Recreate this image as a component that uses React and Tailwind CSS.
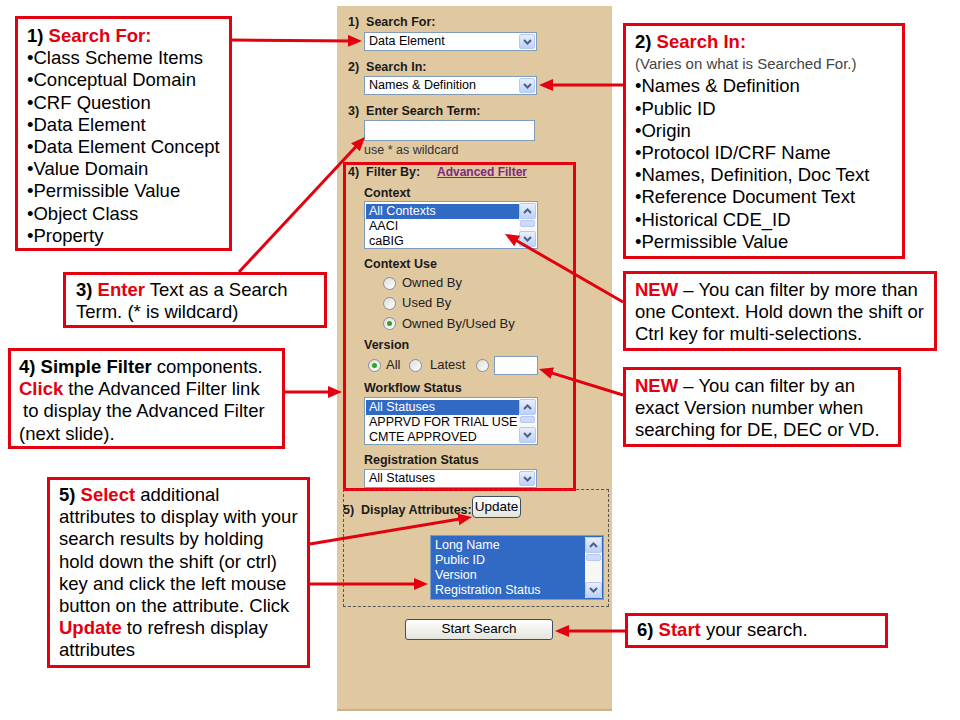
import React from "react";

const RED = "#e3000f";

// arrows: [fromX, fromY, tipX, tipY]
const arrows = [
  [232, 40, 362, 41],
  [623, 85, 539, 85],
  [239, 272, 365, 137],
  [285, 392, 342, 392],
  [623, 302, 505, 234],
  [623, 395, 539, 369],
  [310, 544, 472, 517],
  [310, 584, 428, 584],
  [625, 631, 555, 631],
];

function Chevron({ up }) {
  return (
    <svg width="9" height="6" viewBox="0 0 9 6">
      <path
        d={up ? "M1 5 L4.5 1.5 L8 5" : "M1 1 L4.5 4.5 L8 1"}
        fill="none"
        stroke="#4d6185"
        strokeWidth="2"
      />
    </svg>
  );
}

function ArrowBtn({ up, className = "" }) {
  return (
    <div
      className={`flex items-center justify-center rounded-[2px] border border-[#b7c9f3] bg-linear-to-b from-[#e8effd] to-[#bdd0f8] ${className}`}
    >
      <Chevron up={up} />
    </div>
  );
}

function Dropdown({ value, className = "" }) {
  return (
    <div
      className={`flex h-[19px] w-[173px] items-center border border-[#7f9db9] bg-white pr-px ${className}`}
    >
      <span className="flex-1 whitespace-nowrap pl-[4px] text-[12.5px] leading-none text-black">
        {value}
      </span>
      <ArrowBtn className="h-[15px] w-[16px]" />
    </div>
  );
}

function ListBox({ items, selected = [], allBlue, className = "" }) {
  return (
    <div
      className={`flex border border-[#7f9db9] p-px ${
        allBlue ? "bg-[#316ac5]" : "bg-white"
      } ${className}`}
    >
      <div className="min-w-0 flex-1 pt-px">
        {items.map((it, i) => (
          <div
            key={it}
            className={`h-[15px] overflow-hidden whitespace-nowrap pl-[3px] text-[12.5px] leading-[15px] ${
              selected.includes(i) ? "bg-[#316ac5] text-white" : "text-black"
            }`}
          >
            {it}
          </div>
        ))}
      </div>
      <div className="flex w-[17px] flex-col bg-[#f7f7f4]">
        <ArrowBtn up className="h-[16px]" />
        <div className="flex-1 px-px pt-px">
          <div className="h-[7px] rounded-[2px] border border-[#b7c9f3] bg-[#cddbfb]" />
        </div>
        <ArrowBtn className="h-[16px]" />
      </div>
    </div>
  );
}

function Radio({ checked, className = "" }) {
  return (
    <span
      className={`flex h-[13px] w-[13px] shrink-0 items-center justify-center rounded-full border border-[#8a8f99] bg-linear-to-br from-[#dcdcd7] to-white ${className}`}
    >
      {checked && <span className="h-[5px] w-[5px] rounded-full bg-[#2aa52a]" />}
    </span>
  );
}

function Label({ children, className = "" }) {
  return (
    <div
      className={`h-[14px] whitespace-nowrap text-[12.5px] font-bold leading-[14px] text-[#1a1a1a] ${className}`}
    >
      {children}
    </div>
  );
}

function XpButton({ children, className = "" }) {
  return (
    <div
      className={`flex items-center justify-center rounded-[3px] border border-[#3c4f6a] bg-linear-to-b from-white to-[#e4e4de] text-[13.5px] text-black ${className}`}
    >
      {children}
    </div>
  );
}

function Callout({ className = "", children }) {
  return (
    <div
      className={`absolute whitespace-nowrap border-[3px] border-[#e3000f] bg-white px-[9px] text-[18.5px] leading-[22.2px] text-black ${className}`}
    >
      {children}
    </div>
  );
}

function R({ children }) {
  return <b className="text-[#e3000f]">{children}</b>;
}

function Arrows() {
  return (
    <svg className="pointer-events-none absolute inset-0" width="960" height="720">
      <defs>
        <marker
          id="ah"
          markerWidth="14"
          markerHeight="12"
          refX="6"
          refY="6"
          orient="auto"
          markerUnits="userSpaceOnUse"
        >
          <path d="M0 0 L14 6 L0 12 Z" fill={RED} />
        </marker>
      </defs>
      {arrows.map(([x1, y1, x2, y2], i) => {
        const len = Math.hypot(x2 - x1, y2 - y1);
        const ex = x2 - ((x2 - x1) / len) * 8;
        const ey = y2 - ((y2 - y1) / len) * 8;
        return (
          <line
            key={i}
            x1={x1}
            y1={y1}
            x2={ex}
            y2={ey}
            stroke={RED}
            strokeWidth="3"
            markerEnd="url(#ah)"
          />
        );
      })}
    </svg>
  );
}

export default function App() {
  return (
    <div className="relative h-[720px] w-[960px] overflow-hidden bg-white font-['Liberation_Sans',Arial,sans-serif]">
      {/* search panel */}
      <div className="pl-[337px] pt-[6px]">
        <div className="flex h-[705px] w-[275px] flex-col border-b-2 border-[#c9b18a] bg-[#e0c9a0] pl-[11px] pt-[9px]">
          <Label>1)&nbsp; Search For:</Label>
          <Dropdown value="Data Element" className="ml-[16px] mt-[3px]" />
          <Label className="mt-[9px]">2)&nbsp; Search In:</Label>
          <Dropdown value="Names & Definition" className="ml-[16px] mt-[2px]" />
          <Label className="mt-[9px]">3)&nbsp; Enter Search Term:</Label>
          <div className="ml-[16px] mt-[2px] h-[21px] w-[171px] border border-[#7f9db9] bg-white" />
          <div className="ml-[16px] mt-[2px] h-[14px] text-[12.5px] leading-[14px] text-[#333]">
            use * as wildcard
          </div>

          {/* simple filter */}
          <div className="-ml-[5px] mt-[5px] flex w-[233px] flex-col border-[3px] border-[#e3000f] pl-[2px]">
            <div className="flex h-[14px] items-center">
              <Label className="w-[89px]">4)&nbsp; Filter By:</Label>
              <span className="text-[12px] font-bold leading-[14px] text-[#80287f] underline">
                Advanced Filter
              </span>
            </div>
            <Label className="ml-[16px] mt-[7px]">Context</Label>
            <ListBox
              items={["All Contexts", "AACI", "caBIG"]}
              selected={[0]}
              className="ml-[16px] mt-px h-[48px] w-[174px]"
            />
            <Label className="ml-[16px] mt-[8px]">Context Use</Label>
            <div className="mt-[2px] flex flex-col">
              {["Owned By", "Used By", "Owned By/Used By"].map((t, i) => (
                <div key={t} className={`ml-[35px] flex items-center ${i === 2 ? "h-[21px]" : "h-[20px]"}`}>
                  <Radio checked={i === 2} />
                  <span className="ml-[6px] text-[13px] text-[#222]">{t}</span>
                </div>
              ))}
            </div>
            <Label className="ml-[16px] mt-[4px]">Version</Label>
            <div className="ml-[20px] mt-[3px] flex h-[20px] items-center text-[13px] text-[#222]">
              <Radio checked />
              <span className="ml-[5px] w-[14px]">All</span>
              <Radio className="ml-[9px]" />
              <span className="ml-[8px] w-[34px]">Latest</span>
              <Radio className="ml-[12px]" />
              <div className="ml-[5px] h-[19px] w-[44px] border border-[#7f9db9] bg-white" />
            </div>
            <Label className="ml-[16px] mt-[6px]">Workflow Status</Label>
            <ListBox
              items={["All Statuses", "APPRVD FOR TRIAL USE", "CMTE APPROVED"]}
              selected={[0]}
              className="ml-[16px] mt-[2px] h-[48px] w-[174px]"
            />
            <Label className="ml-[16px] mt-[8px]">Registration Status</Label>
            <Dropdown value="All Statuses" className="ml-[16px] mt-[2px]" />
          </div>

          {/* display attributes */}
          <div className="-ml-[5px] -mt-[2px] flex h-[118px] w-[266px] flex-col border border-dashed border-[#555] pt-[6px]">
            <div className="flex h-[22px] items-start">
              <Label className="-ml-px mt-[7px] w-[129px]">5)&nbsp; Display Attributes:</Label>
              <XpButton className="h-[22px] w-[49px] rounded-[4px]">Update</XpButton>
            </div>
            <ListBox
              items={["Long Name", "Public ID", "Version", "Registration Status"]}
              selected={[0, 1, 2, 3]}
              allBlue
              className="ml-[86px] mt-[17px] h-[65px] w-[174px]"
            />
          </div>

          <XpButton className="ml-[57px] mt-[12px] h-[21px] w-[148px]">Start Search</XpButton>
        </div>
      </div>

      {/* callouts */}
      <Callout className="left-[15px] top-[16px] h-[235px] w-[217px] pt-[6px]">
        <b>1) </b>
        <R>Search For:</R>
        <div>•Class Scheme Items</div>
        <div>•Conceptual Domain</div>
        <div>•CRF Question</div>
        <div>•Data Element</div>
        <div>•Data Element Concept</div>
        <div>•Value Domain</div>
        <div>•Permissible Value</div>
        <div>•Object Class</div>
        <div>•Property</div>
      </Callout>

      <Callout className="left-[623px] top-[23px] h-[236px] w-[282px] pt-[5px]">
        <b>2) </b>
        <R>Search In:</R>
        <div className="text-[15px] text-[#444]">(Varies on what is Searched For.)</div>
        <div>•Names &amp; Definition</div>
        <div>•Public ID</div>
        <div>•Origin</div>
        <div>•Protocol ID/CRF Name</div>
        <div>•Names, Definition, Doc Text</div>
        <div>•Reference Document Text</div>
        <div>•Historical CDE_ID</div>
        <div>•Permissible Value</div>
      </Callout>

      <Callout className="left-[63px] top-[272px] h-[56px] w-[264px] pl-[10px] pt-[4px]">
        <div>
          <b>3) </b>
          <R>Enter</R> Text as a Search
        </div>
        <div>Term. (* is wildcard)</div>
      </Callout>

      <Callout className="left-[8px] top-[348px] h-[101px] w-[277px] pl-[8px] pt-[5px]">
        <div>
          <b>4) Simple Filter</b> components.
        </div>
        <div>
          <R>Click</R> the Advanced Filter link
        </div>
        <div className="pl-[4px]">to display the Advanced Filter</div>
        <div>(next slide).</div>
      </Callout>

      <Callout className="left-[47px] top-[477px] h-[191px] w-[263px] pt-[4px]">
        <div>
          <b>5) </b>
          <R>Select</R> additional
        </div>
        <div>attributes to display with your</div>
        <div>search results by holding</div>
        <div>hold down the shift (or ctrl)</div>
        <div>key and click the left mouse</div>
        <div>button on the attribute. Click</div>
        <div>
          <R>Update</R> to refresh display
        </div>
        <div>attributes</div>
      </Callout>

      <Callout className="left-[623px] top-[271px] h-[80px] w-[314px] pt-[5px]">
        <div>
          <R>NEW</R> – You can filter by more than
        </div>
        <div>one Context. Hold down the shift or</div>
        <div>Ctrl key for multi-selections.</div>
      </Callout>

      <Callout className="left-[623px] top-[367px] h-[80px] w-[278px] pt-[5px]">
        <div>
          <R>NEW</R> – You can filter by an
        </div>
        <div>exact Version number when</div>
        <div>searching for DE, DEC or VD.</div>
      </Callout>

      <Callout className="left-[625px] top-[613px] h-[35px] w-[263px] pt-[3px]">
        <b>6) </b>
        <R>Start</R> your search.
      </Callout>

      <Arrows />
    </div>
  );
}
